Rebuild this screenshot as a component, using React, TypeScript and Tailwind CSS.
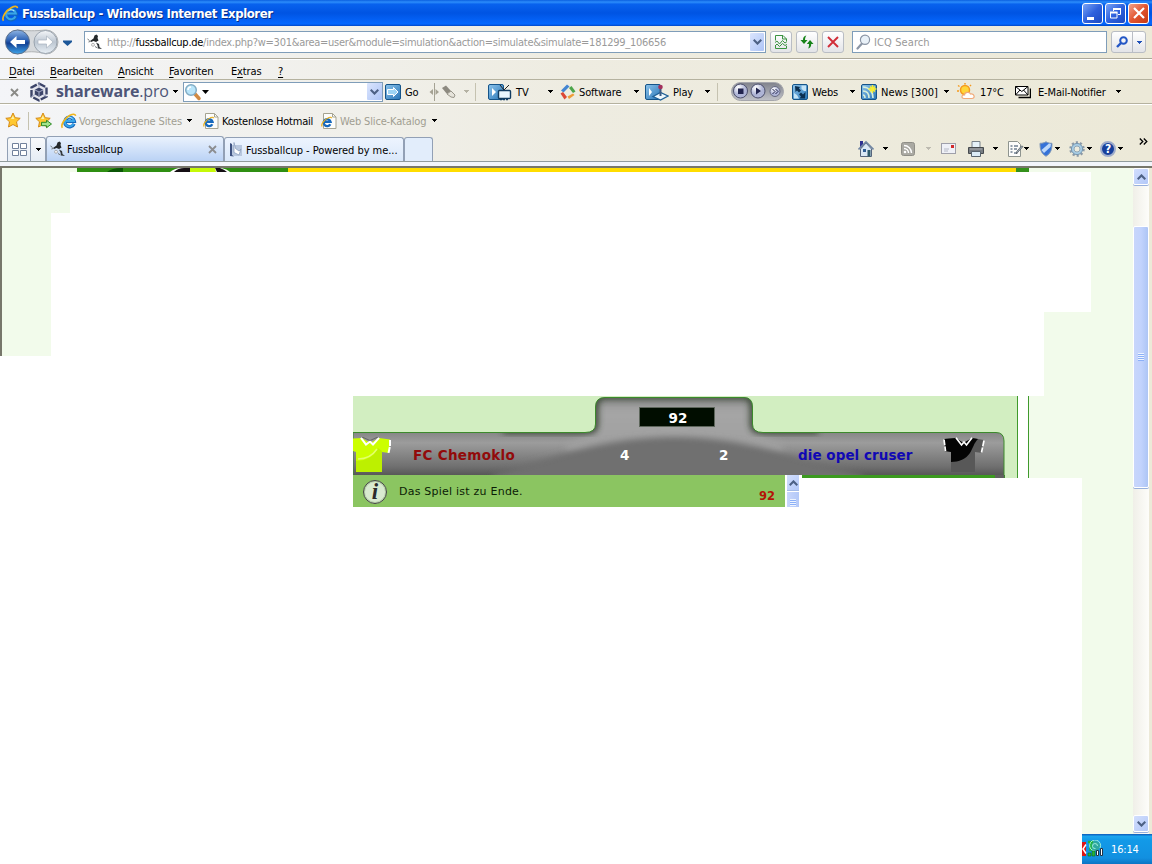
import type { ReactNode } from "react";

const menuItems = [
  { key: "D", rest: "atei", width: "w-[41px]" },
  { key: "B", rest: "earbeiten", width: "w-[68px]" },
  { key: "A", rest: "nsicht", width: "w-[51px]" },
  { key: "F", rest: "avoriten", width: "w-[62px]" },
];

function Caret({ className = "text-black" }: { className?: string }) {
  return (
    <svg width="5" height="3" viewBox="0 0 5 3" className={`shrink-0 ${className}`} shapeRendering="crispEdges">
      <path d="M0 0h5v1h-1v1h-1v1h-1v-1h-1v-1h-1z" fill="currentColor" />
    </svg>
  );
}

function Label({ className = "", children }: { className?: string; children: ReactNode }) {
  return <span className={`shrink-0 whitespace-nowrap pt-[2px] ${className}`}>{children}</span>;
}

function Separator() {
  return <span className="h-[18px] w-px shrink-0 bg-[#c5c2b0]" />;
}

function Chevron({ up = false }: { up?: boolean }) {
  return (
    <svg width="9" height="6" viewBox="0 0 9 6">
      <path d={up ? "M0.7 5.2 4.5 1.4 8.3 5.2" : "M0.7 .8 4.5 4.6 8.3 .8"} fill="none" stroke="#4d6185" strokeWidth="2.1" />
    </svg>
  );
}

function IeIcon({ size = 16 }: { size?: number }) {
  return (
    <svg width={size} height={size} viewBox="0 0 16 16" className="shrink-0">
      <path d="M13 10.8A4.8 4.8 0 1 1 13.3 8.2H5" fill="none" stroke="#1668bb" strokeWidth="3.4" />
      <path d="M12.700 10.600A4.600 4.600 0 1 1 13 8H5" fill="none" stroke="#38a6ea" strokeWidth="1.900" />
      <path d="M11.5 5.800A4.200 4.200 0 0 0 5.500 5.500" fill="none" stroke="#b5e6fc" strokeWidth="1" />
      <path d="M1.400 14.800C-.6 12 3.600 5 9 2.300c3-1.500 5.400-1.500 5.600.6" fill="none" stroke="#f0b51c" strokeWidth="1.600" />
    </svg>
  );
}

function PageIeIcon() {
  return (
    <svg width="16" height="16" viewBox="0 0 16 16" className="shrink-0">
      <path d="M2.500.5h9l3.500 3.500v11.500h-12.500z" fill="#fdfdfb" stroke="#a5a391" />
      <path d="M11.500.5v3.500h3.500" fill="none" stroke="#a5a391" />
      <path d="M9.300 11.200A3.500 3.500 0 1 1 9.600 8.900H3" fill="none" stroke="#1769bd" strokeWidth="2.300" />
      <path d="M1 13.500C0 11 3 6.500 8 4.500c1.500-.5 2.500-.3 2.500.8" fill="none" stroke="#e9af1c" strokeWidth="1.200" />
    </svg>
  );
}

function PlayerIcon() {
  return (
    <svg width="16" height="16" viewBox="0 0 16 16" className="shrink-0">
      <path d="M7.500 1.500 9.500.5l1.500 1.500-.5 2 1 2.500-2.500 1.500-2.500-1L4 8 3 7l3.500-2.500z" fill="#24282b" />
      <path d="M9 8.500 12 10l.5 3 2.500 2-4-.5-.5-3z" fill="#33383b" />
      <path d="M.5 5 2.500 6.500M8 12.500l2.500 1.500M1.500 8l1.500-.5" fill="none" stroke="#6f7477" />
      <circle cx="6" cy="10.800" r="1.500" fill="#f3f3f3" stroke="#999" strokeWidth=".7" />
    </svg>
  );
}

function NavButtons() {
  return (
    <svg width="84" height="32" viewBox="0 0 84 32" className="shrink-0">
      <defs>
        <linearGradient id="back" x1="0" y1="0" x2="0" y2="1">
          <stop offset="0" stopColor="#8fb5e4" />
          <stop offset=".42" stopColor="#2e63b5" />
          <stop offset=".55" stopColor="#123f93" />
          <stop offset="1" stopColor="#3fa5ea" />
        </linearGradient>
        <linearGradient id="forward" x1="0" y1="0" x2="0" y2="1">
          <stop offset="0" stopColor="#f5f7f9" />
          <stop offset=".5" stopColor="#bcc6d1" />
          <stop offset="1" stopColor="#e9f0f6" />
        </linearGradient>
      </defs>
      <path d="M17 4C28 5 34 5 46 4a12 12 0 0 1 0 24C35 25 28 25 17 28z" fill="#d6d9dc" stroke="#b0b3b5" />
      <circle cx="17.500" cy="16" r="12" fill="url(#back)" stroke="#5c708c" />
      <circle cx="45.500" cy="16" r="11.500" fill="url(#forward)" stroke="#99a3ae" />
      <path d="M10 16l6.500-6v4H25v4h-8.500v4z" fill="#fff" />
      <path d="M53 16 46.500 10v4H38v4h8.500v4z" fill="#fff" stroke="#a9b3be" strokeWidth=".7" />
      <path d="M63 14.500h9v1.500l-4.500 4-4.500-4z" fill="#1c5799" />
    </svg>
  );
}

function TitleBar() {
  return (
    <header className="flex h-[26px] items-center bg-[linear-gradient(#0a5fe0,#2c8dfb_8%,#0862ee_16%,#0054e3_50%,#0462f7_80%,#0468ff_92%,#0247c6)] pl-[2px] pr-[3px]">
      <IeIcon size={17} />
      <Label className="ml-[3px] w-[300px] text-[13px] font-bold tracking-[-0.43px] text-white [text-shadow:1px_1px_#0a2e86]">
        Fussballcup - Windows Internet Explorer
      </Label>
      <div className="ml-auto flex gap-[2px]">
        <span className="flex h-[21px] w-[21px] items-end rounded-[3px] border border-white bg-gradient-to-br from-[#7aa2f5] via-[#2f61dd] to-[#1c49c2] pb-[3px] pl-[4px]">
          <span className="h-[3px] w-[7px] bg-white" />
        </span>
        <span className="flex h-[21px] w-[21px] items-center justify-center rounded-[3px] border border-white bg-gradient-to-br from-[#7aa2f5] via-[#2f61dd] to-[#1c49c2]">
          <svg width="11" height="11" viewBox="0 0 11 11" fill="none" stroke="#fff">
            <path d="M3.500 3V.5h7v6H8" />
            <path d="M3 1h8" strokeWidth="2" />
            <path d="M.5 4.500h6.500v5.500H.5z" />
            <path d="M0 4.500h7.500" strokeWidth="2" />
          </svg>
        </span>
        <span className="flex h-[21px] w-[21px] items-center justify-center rounded-[3px] border border-white bg-gradient-to-br from-[#f0a088] via-[#e2552f] to-[#c63a12]">
          <svg width="12" height="12" viewBox="0 0 12 12" stroke="#fff" strokeWidth="2.200">
            <path d="M1 1l10 10M11 1 1 11" />
          </svg>
        </span>
      </div>
    </header>
  );
}

function AddressButton({ children }: { children: ReactNode }) {
  return (
    <span className="flex h-[22px] w-[22px] shrink-0 items-center justify-center rounded-[3px] border border-[#b9bdc4] bg-gradient-to-b from-white to-[#e3e4e8]">
      {children}
    </span>
  );
}

function Magnifier({ color, glass }: { color: string; glass: string }) {
  return (
    <svg width="15" height="16" viewBox="0 0 15 16" className="shrink-0">
      <path d="M6 9.500 1.500 14.500" stroke={color} strokeWidth="2.200" strokeLinecap="round" />
      <circle cx="9" cy="5.800" r="4.600" fill={glass} stroke={color} strokeWidth="1.200" />
    </svg>
  );
}

function AddressBar() {
  return (
    <div className="flex h-[33px] items-center border-b border-[#aca899]">
      <NavButtons />
      <div className="flex h-[22px] w-[682px] shrink-0 items-center border border-[#7f9db9] bg-white pl-[2px] pr-px">
        <PlayerIcon />
        <Label className="ml-[4px] w-[600px] tracking-[-0.27px] text-[#9a9a9a]">
          http://<span className="text-black">fussballcup.de</span>
          /index.php?w=301&amp;area=user&amp;module=simulation&amp;action=simulate&amp;simulate=181299_106656
        </Label>
        <span className="ml-auto flex h-[18px] w-[14px] items-center justify-center rounded-[1px] bg-gradient-to-br from-[#dbe5fd] to-[#adc4f6]">
          <Chevron />
        </span>
      </div>
      <div className="ml-[4px] flex gap-[4px]">
        <AddressButton>
          <svg width="12" height="14" viewBox="0 0 12 14" fill="none" stroke="#3c9441">
            <path d="M.5 5.500V.5h7.500l3.500 3.500v2M.5 11v2.500h11V11M7.500.5V4h4" />
            <path d="M0 7.500 2 6l2.500 3 3-3.500L10 8l2-1.500M0 11l2-2 2.500 2.500 3-3 2.500 2 2-1" />
          </svg>
        </AddressButton>
        <AddressButton>
          <svg width="14" height="14" viewBox="0 0 14 14" fill="#168318">
            <path d="M6.500.5C4 1 3 2.500 3 5H.5L4 9l3.500-4H5C5 3 5.500 1.500 6.500.5z" />
            <path d="M8 13.500c2.300-.5 3.200-2 3.200-4.500h2.300L10 5 6.800 9H9c0 2-.2 3.500-1 4.500z" />
          </svg>
        </AddressButton>
        <AddressButton>
          <svg width="12" height="12" viewBox="0 0 12 12" stroke="#d12d38" strokeWidth="1.900">
            <path d="M1 1l10 10M11 1 1 11" />
          </svg>
        </AddressButton>
      </div>
      <div className="ml-[8px] flex h-[22px] w-[255px] shrink-0 items-center border border-[#7f9db9] bg-white pl-[3px]">
        <Magnifier color="#8b95a5" glass="#e9f1f8" />
        <Label className="ml-[3px] tracking-[0.1px] text-[#999]">ICQ Search</Label>
      </div>
      <div className="ml-[4px] flex h-[22px] w-[35px] shrink-0 items-center rounded-[3px] border border-[#b9bdc4] bg-gradient-to-b from-white to-[#e3e4e8]">
        <span className="flex h-full w-[21px] items-center justify-center border-r border-[#b9bdc4]">
          <svg width="12" height="12" viewBox="0 0 12 12" fill="none" stroke="#2356c5" strokeWidth="2">
            <path d="M5 7 1 11" strokeWidth="2.400" />
            <circle cx="7.500" cy="4.500" r="3.300" />
          </svg>
        </span>
        <span className="flex flex-1 justify-center">
          <Caret className="text-[#1e50b8]" />
        </span>
      </div>
    </div>
  );
}

function MenuBar() {
  return (
    <nav className="flex h-[21px] items-center border-b border-[#b5b29f] border-t border-t-white pl-[9px] pt-[3px]">
      {menuItems.map((item) => (
        <Label key={item.key} className={item.width}>
          <span className="underline underline-offset-2">{item.key}</span>
          {item.rest}
        </Label>
      ))}
      <Label className="w-[47px]">
        E<span className="underline underline-offset-2">x</span>tras
      </Label>
      <Label className="underline underline-offset-2">?</Label>
    </nav>
  );
}

function BlueTile({ children, width = 16 }: { children?: ReactNode; width?: number }) {
  return (
    <svg width={width} height="18" viewBox={`0 0 ${width} 18`} className="shrink-0">
      <defs>
        <linearGradient id="tile" x1="0" y1="0" x2="1" y2="1">
          <stop offset="0" stopColor="#8dc4ec" />
          <stop offset="1" stopColor="#2875b6" />
        </linearGradient>
      </defs>
      <rect x=".5" y="1.500" width="15" height="15" rx="1.500" fill="url(#tile)" stroke="#155489" />
      {children}
    </svg>
  );
}

function SharewareBar() {
  return (
    <div className="flex h-[24px] items-center border-b border-[#b5b29f]">
      <Label className="ml-[10px] flex w-[20px] pt-0">
        <svg width="9" height="9" viewBox="0 0 9 9" stroke="#8a8a86" strokeWidth="1.800">
          <path d="M1 1l7 7M8 1 1 8" />
        </svg>
      </Label>
      <svg width="18" height="20" viewBox="0 0 18 20" className="shrink-0">
        <path d="M9 1.500 16.500 5.500v9L9 18.500 1.500 14.500v-9z" fill="#e4e5ed" stroke="#3c4468" strokeWidth="2.400" strokeDasharray="7 1.500" />
        <path d="M9 5.500l4.200 2.200v4.800L9 14.700l-4.200-2.200V7.700z" fill="#3c4468" />
        <path d="M9 1v4M1.500 14.500 5 12.500M16.500 14.500 13 12.500M5 8l4 2 4-2M9 10v4" fill="none" stroke="#a4aac8" />
      </svg>
      <Label className="ml-[8px] w-[117px] pb-[4px] font-['Open_Sans'] text-[16px] tracking-[-0.18px] text-[#4d5577]">
        <b>shareware</b>.pro
      </Label>
      <Caret />
      <div className="ml-[5px] flex h-[20px] w-[200px] shrink-0 items-center border border-[#7f9db9] bg-white">
        <svg width="18" height="18" viewBox="0 0 18 18">
          <path d="M11 11l4 4.500" stroke="#d08a43" strokeWidth="3.500" strokeLinecap="round" />
          <circle cx="7" cy="7" r="5.300" fill="#b9e5fa" stroke="#82acc4" strokeWidth="1.500" />
          <path d="M4 7a3 3 0 0 1 3-3" fill="none" stroke="#fff" strokeWidth="1.500" />
        </svg>
        <svg width="7" height="4" viewBox="0 0 7 4">
          <path d="M0 0h7L3.500 4z" />
        </svg>
        <span className="ml-auto flex h-[17px] w-[15px] items-center justify-center rounded-[1px] bg-gradient-to-br from-[#dbe5fd] to-[#adc4f6]">
          <Chevron />
        </span>
      </div>
      <span className="ml-[2px] flex w-[20px] shrink-0">
        <BlueTile>
          <path d="M2.500 6.500h6v-2l4.500 4.500-4.500 4.500v-2h-6z" fill="#9ed4f3" stroke="#fff" />
        </BlueTile>
      </span>
      <Label className="w-[24px]">Go</Label>
      <svg width="10" height="18" viewBox="0 0 10 18" fill="#a5a293" className="shrink-0">
        <path d="M4 6v6L.5 9zM6.500 6v6L10 9zM5 0h1v18H5z" />
      </svg>
      <svg width="16" height="14" viewBox="0 0 16 14" className="ml-[2px] shrink-0">
        <path d="M1 3l4-2.500L10 6 6 9z" fill="#8d8a80" />
        <path d="M10 6l4 4-1 2.500-3-.5-4-3z" fill="#e6e4db" stroke="#98958a" />
      </svg>
      <span className="flex w-[18px] shrink-0 justify-center">
        <Caret className="text-[#b5b2a4]" />
      </span>
      <Separator />
      <span className="ml-[12px] flex w-[28px] shrink-0">
        <BlueTile width={24}>
          <path d="M4 5v8l4-4z" fill="#fff" />
          <path d="M12 2l4 5 5-5" fill="none" stroke="#222" />
          <rect x="10.500" y="7.500" width="12" height="8" rx="1" fill="#e9f6fd" stroke="#123c61" strokeWidth="1.400" />
          <path d="M12 16.500h9" stroke="#123c61" strokeWidth="1.500" strokeDasharray="2 1" />
        </BlueTile>
      </span>
      <Label className="w-[32px]">TV</Label>
      <Caret />
      <svg width="18" height="18" viewBox="0 0 18 18" className="ml-[6px] shrink-0">
        <path d="M2 7.500l6-6 2.500 2-6 6z" fill="#4385d2" />
        <path d="M10 5l2.500-2 4 5.500-2.500 1.500z" fill="#4ca54a" />
        <path d="M1.500 10.500l2.500-1.500 4 5-2.500 2.500z" fill="#dd4836" />
        <path d="M8.500 13.500l5.500-3 1.500 1.500-5.500 4z" fill="#ee9d38" />
      </svg>
      <Label className="ml-[2px] w-[55px]">Software</Label>
      <Caret />
      <span className="ml-[6px] flex w-[28px] shrink-0">
        <BlueTile width={24}>
          <path d="M4 5v8l3-4z" fill="#fff" />
          <path d="M8 13.500 15.500 9.500l7.500 3.500-7.500 4z" fill="#eff8fd" stroke="#1e5f96" strokeWidth="1.300" />
          <path d="M15.500 13V5" stroke="#3b5b84" strokeWidth="2" />
          <circle cx="15.500" cy="4" r="2.300" fill="#a3305c" />
        </BlueTile>
      </span>
      <Label className="w-[32px]">Play</Label>
      <Caret />
      <span className="ml-[7px] flex w-[14px]">
        <Separator />
      </span>
      <svg width="53" height="20" viewBox="0 0 53 20" className="shrink-0">
        <defs>
          <linearGradient id="player" x1="0" y1="0" x2="0" y2="1">
            <stop offset="0" stopColor="#80828c" />
            <stop offset="1" stopColor="#c0c2c9" />
          </linearGradient>
          <radialGradient id="knob" cx=".35" cy=".25">
            <stop offset="0" stopColor="#fff" />
            <stop offset="1" stopColor="#aeb4d6" />
          </radialGradient>
        </defs>
        <rect x=".5" y=".5" width="52" height="18" rx="9" fill="url(#player)" stroke="#a5a6ac" />
        <circle cx="9.500" cy="9" r="7" fill="url(#knob)" stroke="#4d506d" />
        <circle cx="27" cy="9" r="7" fill="url(#knob)" stroke="#4d506d" />
        <circle cx="44" cy="9.500" r="5" fill="url(#knob)" stroke="#666982" />
        <path d="M7 6.500h5.500V12H7zM25 5.500v7L30 9z" fill="#20234e" />
        <path d="M41.500 7l2.500 2.500-2.500 2.500M44.500 7l2.500 2.500-2.500 2.500" fill="none" stroke="#20234e" />
      </svg>
      <span className="ml-[8px] flex w-[20px] shrink-0">
        <BlueTile>
          <path d="M9.500 2.500H14V8h-2L9.500 6zM2 10l3 2 2 3.500H2z" fill="#c3e3f6" />
          <path d="M3 3l5 1-1 1.500 2 2L7 9.500l-2-2L3.500 9z" fill="#0b2f50" />
          <path d="M13 15.500H7.500L9 13.500l-2-2L9 9.500l2 2L13.500 9z" fill="#0b2f50" />
        </BlueTile>
      </span>
      <Label className="w-[38px]">Webs</Label>
      <Caret />
      <span className="ml-[6px] flex w-[20px] shrink-0">
        <BlueTile>
          <path d="M2 4c6 0 10 5 10 11M2 8c4 0 6 3 6 7M2 12c1 0 2 1 2 3" fill="none" stroke="#d8f0da" strokeWidth="1.600" />
          <path d="M11.500 2v8M7.500 6h8M9 3.500l5 5M14 3.500l-5 5" stroke="#f9ee2f" strokeWidth="1.500" />
        </BlueTile>
      </span>
      <Label className="w-[63px] tracking-[0.05px]">News [300]</Label>
      <Caret />
      <svg width="20" height="18" viewBox="0 0 20 18" className="ml-[8px] shrink-0">
        <circle cx="8" cy="7" r="4.500" fill="#ffd63a" stroke="#f59a1d" strokeWidth="1.500" />
        <path d="M8 0v1.500M1 2.500l1.500 1M0 8h2M14 2l-1 1" stroke="#f59a1d" strokeWidth="1.500" />
        <path d="M5 15.500c-3 0-2.500-4 .5-3.500 0-3 5-3.500 6-1 4-1 5 4.500 1.500 4.500z" transform="translate(2)" fill="#fff" stroke="#f0aa7a" strokeWidth="1.200" />
      </svg>
      <Label className="ml-[3px] w-[35px]">17°C</Label>
      <svg width="16" height="14" viewBox="0 0 16 14" className="shrink-0">
        <path d="M3.500 12.500h12v-9" fill="none" stroke="#000" strokeWidth="1.500" />
        <path d="M.5 1.500h12.500v8.500H.5z" fill="#fff" stroke="#000" />
        <path d="M.5 1.500l6.300 5 6.200-5M.5 10l4.500-5M13 10 8.500 5" fill="none" stroke="#000" />
      </svg>
      <Label className="ml-[7px] w-[78px]">E-Mail-Notifier</Label>
      <Caret />
    </div>
  );
}

function Star({ children }: { children?: ReactNode }) {
  return (
    <svg width="17" height="17" viewBox="0 0 17 17" className="shrink-0">
      <path d="M8 1l2.200 4.700 5 .6-3.700 3.500 1 5.200L8 12.500 3.500 15l1-5.200L.8 6.300l5-.6z" fill="#ffc831" stroke="#d58a16" />
      <path d="M8 3.500 9.300 7H6z" fill="#fff1a8" />
      {children}
    </svg>
  );
}

function FavoritesBar() {
  return (
    <div className="flex h-[32px] items-center border-t border-white pl-[5px]">
      <Star />
      <span className="ml-[6px] flex w-[7px]">
        <Separator />
      </span>
      <Star>
        <path d="M6.500 10.300h5v-2l5 3.700-5 3.700v-2h-5z" fill="#a2e38d" stroke="#2d8a26" />
      </Star>
      <span className="ml-[9px] flex w-[18px]">
        <IeIcon />
      </span>
      <Label className="w-[108px] text-[#a19e91]">Vorgeschlagene Sites</Label>
      <Caret />
      <span className="ml-[11px] flex w-[19px]">
        <PageIeIcon />
      </span>
      <Label className="w-[99px] tracking-[-0.23px]">Kostenlose Hotmail</Label>
      <span className="flex w-[19px]">
        <PageIeIcon />
      </span>
      <Label className="w-[92px] text-[#a19e91]">Web Slice-Katalog</Label>
      <Caret />
    </div>
  );
}

function CommandIcons() {
  return (
    <div className="flex h-[25px] flex-1 items-center pl-[425px]">
      <svg width="16" height="18" viewBox="0 0 16 18" className="shrink-0">
        <path d="M2 1h3v7H2z" fill="#2e3192" />
        <path d="M2.500 9v7.500h11V9L8 3z" fill="#dbe8f5" stroke="#56657c" />
        <path d="M.5 9.500 8 2l7.500 7.500" fill="none" stroke="#7186a3" strokeWidth="1.600" />
        <path d="M5 9h3v3H5z" fill="#315e93" />
        <path d="M9.500 10h3v6.500h-3z" fill="#305b6b" />
      </svg>
      <span className="ml-[9px] flex w-[18px]">
        <Caret />
      </span>
      <svg width="14" height="14" viewBox="0 0 14 14" className="shrink-0">
        <rect x=".5" y=".5" width="13" height="13" rx="2" fill="#aaa9a2" stroke="#8f8e87" />
        <circle cx="4" cy="10" r="1.300" fill="#fff" />
        <path d="M3 6.500A4.500 4.500 0 0 1 7.500 11M3 3.500a7.500 7.500 0 0 1 7.500 7.500" fill="none" stroke="#fff" strokeWidth="1.400" />
      </svg>
      <span className="ml-[11px] flex w-[15px]">
        <Caret className="text-[#bdbab0]" />
      </span>
      <svg width="15" height="11" viewBox="0 0 15 11" className="shrink-0">
        <rect x=".5" y=".5" width="14" height="10" fill="#eff1f7" stroke="#9fa0aa" />
        <path d="M10 2h3v3h-3z" fill="#d22a2a" />
        <path d="M3 6h5M3 8h4" stroke="#b6bac6" />
      </svg>
      <svg width="16" height="16" viewBox="0 0 16 16" className="ml-[12px] shrink-0">
        <path d="M4 .5h8v6H4z" fill="#e6f2fa" stroke="#78828b" />
        <path d="M.5 6.500h15v6H.5z" fill="#787d82" stroke="#464a4e" />
        <path d="M3.500 10.500h9v5h-9z" fill="#dcecf6" stroke="#59656e" />
        <path d="M2 8h12" stroke="#a9adb1" />
      </svg>
      <span className="ml-[9px] flex w-[14px]">
        <Caret />
      </span>
      <svg width="17" height="16" viewBox="0 0 17 16" className="shrink-0">
        <path d="M1.500.5h9l3 3v12h-12z" fill="#fcfcfa" stroke="#8e948f" />
        <path d="M3.500 5h2M3.500 8h2M3.500 11h2M7 5h4M7 8h3M7 12h3" stroke="#6f7f91" strokeWidth="1.300" />
        <path d="M16 5.500 11 11l-1.500 2 .2-2.500L14.500 5z" fill="#aab5be" stroke="#555e66" strokeWidth=".8" />
      </svg>
      <span className="flex w-[15px]">
        <Caret />
      </span>
      <svg width="14" height="16" viewBox="0 0 14 16" className="shrink-0">
        <path d="M7 .8c2 1.200 4 1.500 6 1.500 0 6-1 10-6 13-5-3-6-7-6-13 2 0 4-.3 6-1.500z" fill="#3572d8" stroke="#8299b6" />
        <path d="M2.500 9 10 2.500l2 .5-.5 3L5 12z" fill="#bcd8fb" />
      </svg>
      <span className="ml-[2px] flex w-[14px]">
        <Caret />
      </span>
      <svg width="16" height="16" viewBox="0 0 16 16" className="shrink-0">
        <circle cx="8" cy="8" r="6.500" fill="none" stroke="#8c99a6" strokeWidth="2.500" strokeDasharray="2.100 2" />
        <circle cx="8" cy="8" r="4.500" fill="none" stroke="#a6cce5" strokeWidth="2.500" />
        <circle cx="8" cy="8" r="5.600" fill="none" stroke="#7997ae" />
        <circle cx="8" cy="8" r="3" fill="#ecebdd" stroke="#7997ae" strokeWidth=".8" />
      </svg>
      <span className="ml-[2px] flex w-[13px]">
        <Caret />
      </span>
      <span className="flex h-[16px] w-[16px] shrink-0 items-center justify-center rounded-full border-2 border-[#9facca] bg-[#173f9c] text-[12px] font-bold text-white">
        ?
      </span>
      <span className="ml-[2px] flex w-[21px]">
        <Caret />
      </span>
      <svg width="9" height="7" viewBox="0 0 9 7" className="mb-[15px] shrink-0" fill="none" stroke="#000" strokeWidth="1.300">
        <path d="M.8.500l3 3-3 3M4.800.500l3 3-3 3" />
      </svg>
    </div>
  );
}

function TabBar() {
  return (
    <div className="flex h-[26px] items-end border-b border-[#919b9c] pl-[7px]">
      <div className="flex h-[24px] w-[39px] shrink-0 items-center rounded-t-[3px] border border-b-0 border-[#92a0b5] bg-gradient-to-b from-[#f8f9fb] to-[#e5ecf5]">
        <span className="flex h-full w-[23px] items-center justify-center border-r border-[#92a0b5]">
          <svg width="15" height="13" viewBox="0 0 15 13" fill="#fff" stroke="#71819c">
            <path d="M.5.5h6v5h-6zM8.500.5h6v5h-6zM.5 7.500h6v5h-6zM8.500 7.500h6v5h-6z" />
          </svg>
        </span>
        <span className="flex flex-1 justify-center">
          <Caret />
        </span>
      </div>
      <div className="flex h-[25px] w-[178px] shrink-0 items-center rounded-t-[3px] border border-b-0 border-[#92a0b5] bg-gradient-to-b from-[#eaf2fd] to-[#bad2f5] pl-[3px] pr-[6px]">
        <PlayerIcon />
        <Label className="ml-px">Fussballcup</Label>
        <svg width="9" height="9" viewBox="0 0 9 9" stroke="#8c8d90" strokeWidth="1.800" className="ml-auto">
          <path d="M1 1l7 7M8 1 1 8" />
        </svg>
      </div>
      <div className="flex h-[24px] w-[180px] shrink-0 items-center rounded-t-[3px] border border-b-0 border-[#92a0b5] bg-gradient-to-b from-[#edf4fe] to-[#dae8fa] pl-[4px]">
        <svg width="14" height="15" viewBox="0 0 14 15">
          <path d="M1 3h12v11H3z" fill="#b9c8df" />
          <path d="M1 1l2 1v11l2 1.500-4-.5z" fill="#3e5280" />
          <path d="M5 .5l1.500 6L10 9l2-2-2 6-5-2.500z" fill="#fff" stroke="#8197b8" strokeWidth=".7" />
        </svg>
        <Label className="ml-[3px] tracking-[-0.05px]">Fussballcup - Powered by me...</Label>
      </div>
      <div className="h-[24px] w-[29px] shrink-0 rounded-t-[3px] border border-b-0 border-[#92a0b5] bg-[#e2edfb]" />
      <CommandIcons />
    </div>
  );
}

function PageScrollbar() {
  return (
    <div className="flex w-[19px] shrink-0 flex-col border-r-[3px] border-[#ece9d8] bg-gradient-to-r from-[#f0efe8] to-[#fdfdfa]">
      <span className="flex h-[17px] w-[16px] items-center justify-center rounded-[2px] border border-white bg-gradient-to-br from-[#d2defd] to-[#b3c8f8] shadow-[0_1px_#98b0dc]">
        <Chevron up />
      </span>
      <span className="mt-[41px] flex h-[262px] w-[16px] items-center justify-center rounded-[2px] border border-white bg-gradient-to-r from-[#c8d6fb] via-[#c2d3fd] to-[#adc5f5] shadow-[0_1px_#98b0dc]">
        <span className="h-[8px] w-[6px] bg-[repeating-linear-gradient(#eef4fe_0_1px,#8cb0f8_1px_2px)]" />
      </span>
      <span className="mb-[2px] mt-auto flex h-[17px] w-[16px] items-center justify-center rounded-[2px] border border-white bg-gradient-to-br from-[#d2defd] to-[#b3c8f8] shadow-[0_1px_#98b0dc]">
        <Chevron />
      </span>
    </div>
  );
}

function ScoreboardArt() {
  const outline =
    "M0 36.500H232Q242.500 36.500 242.500 28V11Q242.500 1.500 252 1.500H391Q399.500 1.500 399.500 11V28Q399.500 36.500 410 36.500H643Q651 36.500 651 45V90H0z";
  return (
    <svg width="664" height="79" viewBox="0 0 664 79" className="absolute inset-0" aria-hidden="true">
      <defs>
        <linearGradient id="board" x1="0" y1="36" x2="0" y2="79" gradientUnits="userSpaceOnUse">
          <stop offset="0" stopColor="#858585" />
          <stop offset=".25" stopColor="#9c9c9c" />
          <stop offset=".8" stopColor="#707070" />
          <stop offset="1" stopColor="#585858" />
        </linearGradient>
        <linearGradient id="hub" x1="0" y1="0" x2="0" y2="79" gradientUnits="userSpaceOnUse">
          <stop offset="0" stopColor="#8c8c8c" />
          <stop offset=".2" stopColor="#a6a6a6" />
          <stop offset="1" stopColor="#9a9a9a" />
        </linearGradient>
        <filter id="soft" x="-10%" y="-20%" width="120%" height="140%">
          <feGaussianBlur stdDeviation="3" />
        </filter>
        <clipPath id="boardClip">
          <path d={outline} />
        </clipPath>
      </defs>
      <path d={outline} fill="url(#board)" />
      <g clipPath="url(#boardClip)">
        <path d="M243-5H400V37L430 48V56H213V48L243 37z" fill="url(#hub)" filter="url(#soft)" />
        <path d="M140 79C200 62 250 41 321 41S440 62 510 79V86H140z" fill="#707070" filter="url(#soft)" />
        <path
          d="M150 34H232Q242 34 242 28V11Q242 0 252 0H391Q400 0 400 11V28Q400 34 410 34H465"
          fill="none"
          stroke="#2b3a26"
          strokeWidth="7"
          opacity=".8"
          filter="url(#soft)"
        />
        <path d="M652 42V90" stroke="#333" strokeWidth="6" opacity=".5" filter="url(#soft)" />
        <path d="M0 81H664" stroke="#333" strokeWidth="6" opacity=".7" filter="url(#soft)" />
      </g>
      <path d={outline} fill="none" stroke="#3c8a2c" />
    </svg>
  );
}

function HomeShirt() {
  return (
    <svg width="39" height="36" viewBox="0 0 39 36" className="shrink-0">
      <path d="M0 1.500 9 1l8 5 9-5 11 1.500-1 13.500-7-1v20H3V15l-3-1z" fill="#cf0" />
      <path d="M3 31V24c11 0 19-6 22-13l4 3v21H3z" fill="#bdf000" />
      <path d="M5 22c9 0 15-4 19-10" fill="none" stroke="#e3ff6a" strokeWidth="1.500" />
      <path d="M8 .8 13 7.500l4-3 3 3L26 .8" fill="none" stroke="#fff" strokeWidth="2" />
      <path d="M9 0l8 3.500L25 0" fill="none" stroke="#555" strokeWidth=".7" />
      <path d="M37 3v6l-1.500 7" stroke="#fff" strokeWidth="2" strokeDasharray="6 1" fill="none" />
    </svg>
  );
}

function AwayShirt() {
  return (
    <svg width="42" height="36" viewBox="0 0 42 36" className="shrink-0">
      <path d="M1 2 13 1l7.500 5L29 1l12 2-2 13-7-1v20H8V15l-6-1z" fill="#585858" />
      <path d="M1 2 13 1l7.500 5L29 1l6 1c-4 4-5 9-8 14-4 6-11 9-19 9V15l-6-1z" fill="#040404" />
      <path d="M13 .8 18.500 8l2.500-3 2.500 3L29 .8" fill="none" stroke="#fff" strokeWidth="1.700" />
      <path d="M1 2.500 2.500 14M41 3.500l-2.500 12" stroke="#fff" strokeWidth="1.700" strokeDasharray="6 1" fill="none" />
    </svg>
  );
}

function Scoreboard() {
  return (
    <div className="relative flex h-[79px] flex-col bg-[#d2eec1] font-['DejaVu_Sans',sans-serif] text-[13px] font-bold tracking-normal">
      <ScoreboardArt />
      <div className="relative flex h-[37px] pl-[286px] pt-[11px]">
        <span className="flex h-[20px] w-[76px] items-center justify-center border border-[#5d665b] bg-[#010d00] pl-[2px] pt-[2px] text-[13.500px] text-white">
          92
        </span>
      </div>
      <div className="relative flex h-[42px] items-center text-[13.500px]">
        <span className="mt-px flex w-[60px] shrink-0">
          <HomeShirt />
        </span>
        <Label className="w-[207px] tracking-[0.3px] text-[#920a0a]">FC Chemoklo</Label>
        <Label className="w-[99px] text-white">4</Label>
        <Label className="w-[79px] text-white">2</Label>
        <Label className="w-[145px] tracking-[0.05px] text-[#1008b4]">die opel cruser</Label>
        <span className="mt-[2px] flex">
          <AwayShirt />
        </span>
      </div>
    </div>
  );
}

function MatchPanel() {
  return (
    <section className="flex w-[664px] shrink-0 flex-col">
      <Scoreboard />
      <div className="flex h-[32px]">
        <div className="flex w-[432px] shrink-0 items-center bg-[#8bc561] pl-[10px] font-['DejaVu_Sans',sans-serif] text-[11px] tracking-normal">
          <span className="mt-[2px] flex h-[24px] w-[24px] items-center justify-center rounded-full border border-[#444] bg-[#d9ead0] pb-px font-['Liberation_Serif',serif] text-[23px] font-bold italic leading-none text-[#2b2b2b] shadow-[inset_0_0_0_1px_#b5cfa8]">
            i
          </span>
          <Label className="ml-[12px] tracking-[0.23px] text-[#0c1c06]">Das Spiel ist zu Ende.</Label>
          <Label className="ml-auto mr-[10px] mt-[7px] text-[11.500px] font-bold text-[#b31507]">92</Label>
        </div>
        <div className="flex w-[14px] shrink-0 flex-col gap-[2px] border-l-2 border-white bg-white">
          <span className="flex h-[15px] items-center justify-center bg-gradient-to-br from-[#d2defd] to-[#b3c8f8] shadow-[0_1px_#a4bbe8]">
            <Chevron up />
          </span>
          <span className="flex flex-1 items-end justify-center bg-gradient-to-r from-[#c8d6fb] to-[#b3c8f8] pb-px">
            <span className="h-[7px] w-[6px] bg-[repeating-linear-gradient(#eef4fe_0_1px,#8cb0f8_1px_2px)]" />
          </span>
        </div>
        <div className="flex h-[3px] flex-1 bg-[#d2eec1]">
          <span className="w-[3px] bg-white" />
          <span className="w-[193px] bg-[#3c9a20]" />
          <span className="w-[10px] border-r border-[#3c8a2c] bg-[#606060]" />
        </div>
      </div>
    </section>
  );
}

function PageContent() {
  return (
    <main className="flex flex-1 flex-col bg-white">
      <div className="flex h-[4px] border-l-2 border-[#77776b] bg-[#f2fbeb]">
        <svg width="211" height="4" viewBox="0 0 211 4" className="ml-[75px]">
          <path d="M0 0h211v4H0z" fill="#2f8f12" />
          <path d="M30 4q5-4 14-4h2v4z" fill="#0b5606" />
          <path d="M93 4Q98 0 104 0h40q6 1 9 4z" fill="#fff" />
          <path d="M97 4q4-4 10-4h6v4zM138 0h5q5 2 7 4h-10z" fill="#150f14" />
          <path d="M113 0h25l1 4h-26z" fill="#c6f908" />
        </svg>
        <span className="w-[728px] bg-[#ffdd00]" />
        <span className="w-[13px] bg-[#34911b]" />
      </div>
      <div className="flex h-[41px] justify-between border-l-2 border-[#77776b]">
        <span className="w-[68px] bg-[#f2fbeb]" />
        <span className="w-[42px] bg-[#f2fbeb]" />
      </div>
      <div className="flex h-[99px] justify-between border-l-2 border-[#77776b]">
        <span className="w-[49px] bg-[#f2fbeb]" />
        <span className="w-[42px] bg-[#f2fbeb]" />
      </div>
      <div className="flex h-[44px] justify-between border-l-2 border-[#77776b]">
        <span className="w-[49px] bg-[#f2fbeb]" />
        <span className="w-[89px] bg-[#f2fbeb]" />
      </div>
      <div className="flex h-[40px] justify-end">
        <span className="w-[89px] bg-[#f2fbeb]" />
      </div>
      <div className="flex h-[111px] pl-[353px]">
        <MatchPanel />
        <div className="flex flex-1 flex-col">
          <div className="flex h-[82px]">
            <span className="w-[12px] border-x border-[#3f9a2c]" />
            <span className="flex-1 bg-[#f2fbeb]" />
          </div>
          <span className="ml-auto w-[51px] flex-1 bg-[#f2fbeb]" />
        </div>
      </div>
      <span className="ml-auto w-[51px] flex-1 bg-[#f2fbeb]" />
    </main>
  );
}

function Taskbar() {
  return (
    <footer className="flex h-[30px] bg-white pl-[1082px]">
      <div className="flex w-[70px] items-center bg-[linear-gradient(#0c59b9,#1ba5ee_8%,#129ae8_20%,#1290e0_80%,#0c74c4)] text-white">
        <svg width="22" height="18" viewBox="0 0 22 18" className="shrink-0">
          <path d="M0 2h4v14H0z" fill="#dd1515" />
          <path d="M4 4.500 1 9l3 4.500" fill="none" stroke="#fff" strokeWidth="1.500" />
          <circle cx="13" cy="6" r="5" fill="#2fa8a0" />
          <path d="M6 2h5M8.500 2v9" stroke="#21b33a" strokeWidth="2.500" />
          <path d="M15.500 6a2.500 2.500 0 1 0-2 2.500M18 8a5.500 5.500 0 1 0-5 3" fill="none" stroke="#9ff0d8" />
          <path d="M6 13h3v3H6zM10 11h3v5h-3z" fill="#26b33a" stroke="#0d6a20" strokeWidth=".6" />
          <path d="M14.500 10.500h2v5h-2zM18.500 8.500h2v7h-2z" fill="#fff" stroke="#234" />
        </svg>
        <Label className="ml-[7px]">16:14</Label>
      </div>
    </footer>
  );
}

export default function App() {
  return (
    <div className="flex h-[864px] w-[1152px] flex-col overflow-hidden bg-white font-['DejaVu_Sans_Condensed','DejaVu_Sans',sans-serif] text-[11px] leading-[14px] tracking-[-0.15px] text-black">
      <TitleBar />
      <div className="flex flex-col bg-gradient-to-r from-[#f4f5f8] via-[#eeece1] to-[#ece9d8]">
        <AddressBar />
        <MenuBar />
        <SharewareBar />
        <FavoritesBar />
        <TabBar />
      </div>
      <div className="h-[6px] border-b-2 border-[#77776b] bg-[#f2f5fb]" />
      <div className="flex flex-1">
        <PageContent />
        <PageScrollbar />
      </div>
      <Taskbar />
    </div>
  );
}
